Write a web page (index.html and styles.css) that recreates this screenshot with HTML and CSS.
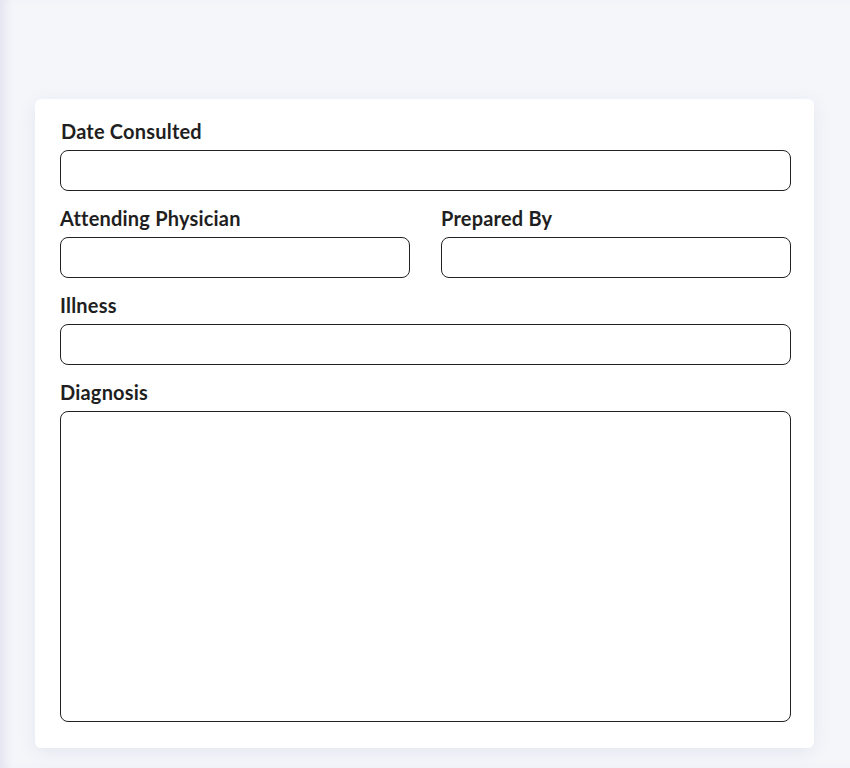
FILE: index.html
```html
<!DOCTYPE html>
<html lang="en">
<head>
<meta charset="utf-8">
<title>Consultation</title>
<link rel="stylesheet" href="styles.css">
</head>
<body>
<main class="page">
  <form class="card">
    <div class="field">
      <label class="label label-first" for="date">Date Consulted</label>
      <input class="input" id="date" type="text">
    </div>
    <div class="row">
      <div class="field">
        <label class="label" for="phys">Attending Physician</label>
        <input class="input" id="phys" type="text">
      </div>
      <div class="field">
        <label class="label" for="prep">Prepared By</label>
        <input class="input" id="prep" type="text">
      </div>
    </div>
    <div class="field">
      <label class="label" for="ill">Illness</label>
      <input class="input" id="ill" type="text">
    </div>
    <div class="field">
      <label class="label" for="diag">Diagnosis</label>
      <textarea class="input textarea" id="diag"></textarea>
    </div>
  </form>
</main>
</body>
</html>
```
FILE: styles.css
```css
* { box-sizing: border-box; }
html, body { margin: 0; padding: 0; }
body {
  font-family: Lato, "Liberation Sans", sans-serif;
  background: #f5f6fa;
  color: #1f1f22;
}
.page {
  min-height: 768px;
  padding: 99px 36px 20px 35px;
  box-shadow: inset 10px 0 12px -6px rgba(90, 105, 160, 0.14);
}
.card {
  background: #ffffff;
  border-radius: 6px;
  box-shadow: 0 4px 18px rgba(110, 120, 170, 0.12);
  padding: 21px 23px 26px 25px;
  display: flex;
  flex-direction: column;
  gap: 16px;
}
.row {
  display: grid;
  grid-template-columns: 1fr 1fr;
  column-gap: 31px;
}
.field {
  display: flex;
  flex-direction: column;
}
.label {
  font-size: 20px;
  font-weight: 700;
  line-height: 22px;
  letter-spacing: 0.2px;
  margin-bottom: 8px;
  color: #1f1f22;
}
.label-first { padding-left: 1px; }
.input {
  display: block;
  width: 100%;
  height: 41px;
  border: 1px solid #222226;
  border-radius: 8px;
  background: #fff;
  font: inherit;
  padding: 0 12px;
  outline: none;
}
.textarea {
  height: 311px;
  resize: none;
}
```
